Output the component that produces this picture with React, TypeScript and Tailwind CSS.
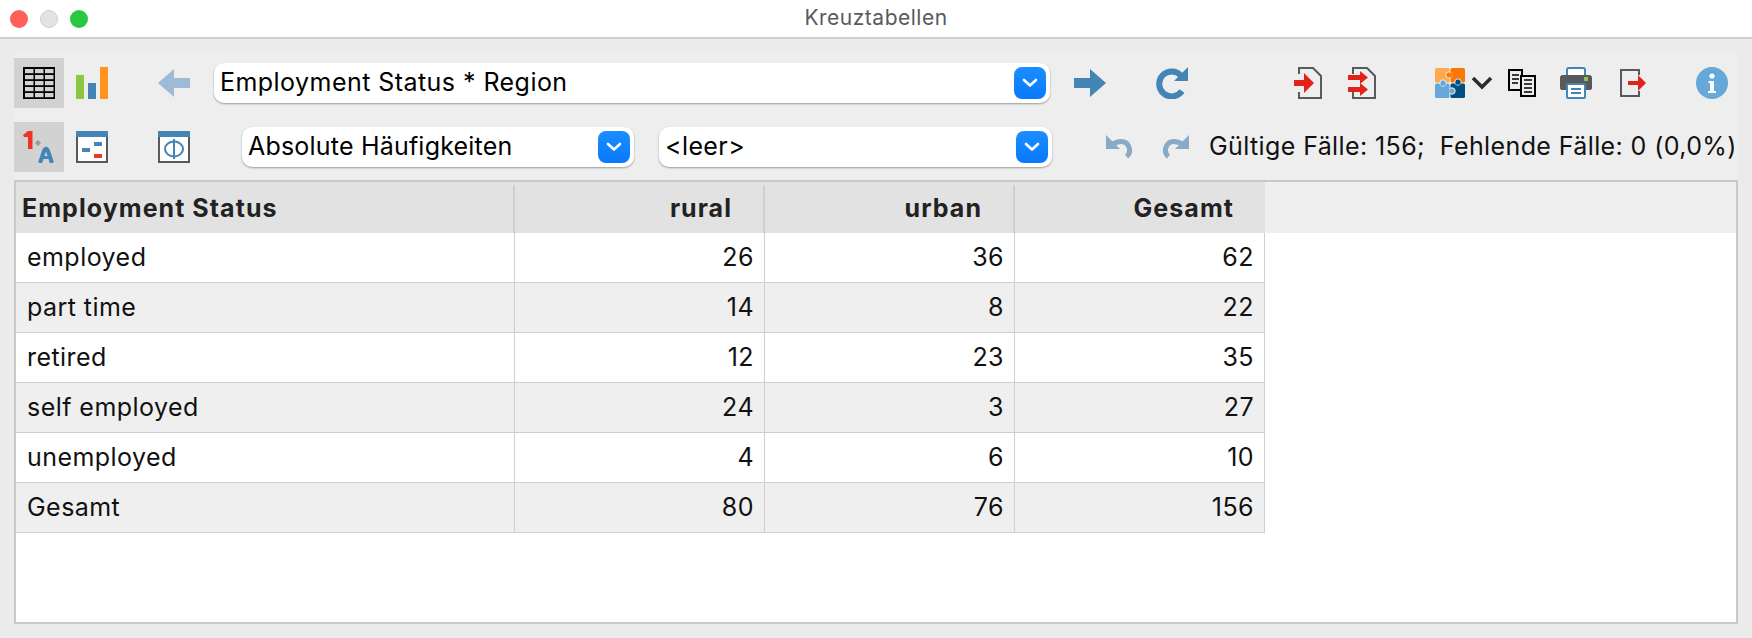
import React from 'react';

const FONT = 'font-["Inter","Liberation_Sans",sans-serif]';

const rows = [
  ['employed', '26', '36', '62'],
  ['part time', '14', '8', '22'],
  ['retired', '12', '23', '35'],
  ['self employed', '24', '3', '27'],
  ['unemployed', '4', '6', '10'],
  ['Gesamt', '80', '76', '156'],
];

const ToolButton: React.FC<{ selected?: boolean; className?: string; children: React.ReactNode }> = ({
  selected,
  className = '',
  children,
}) => (
  <div className={`flex h-[50px] w-[50px] shrink-0 items-center justify-center ${selected ? 'bg-[#d2d2d2]' : ''} ${className}`}>
    {children}
  </div>
);

const Select: React.FC<{ label: string; className: string }> = ({ label, className }) => (
  <div className={`flex h-[40px] shrink-0 items-center justify-between rounded-[10px] bg-white pl-[6px] pr-[4px] text-[25px] text-black shadow-[0_1px_2px_rgba(0,0,0,0.35)] ${className}`}>
    <span>{label}</span>
    <div className="flex h-[32px] w-[32px] items-center justify-center rounded-[8px] bg-gradient-to-b from-[#1a8fff] to-[#0a78fa]">
      <svg width="16" height="10" viewBox="0 0 16 10">
        <path d="M2 2l6 5.5L14 2" fill="none" stroke="#fff" strokeWidth="2.6" strokeLinecap="round" strokeLinejoin="round" />
      </svg>
    </div>
  </div>
);

const GridIcon = () => (
  <svg width="32" height="32" viewBox="0 0 32 32">
    <rect x="0" y="0" width="32" height="32" fill="#000" />
    {[2, 8, 14, 20, 26].map(y =>
      [2, 12, 22].map(x => <rect key={`${x}-${y}`} x={x} y={y} width="8.5" height="4.2" fill="#d2d2d2" />)
    )}
  </svg>
);

const ChartIcon = () => (
  <svg width="32" height="32" viewBox="0 0 32 32">
    <rect x="0" y="8" width="8" height="24" fill="#8cc63f" />
    <rect x="12" y="16" width="8" height="16" fill="#4385b5" />
    <rect x="24" y="0" width="8" height="32" fill="#ff931e" />
  </svg>
);

const ArrowLeftIcon = () => (
  <svg width="32" height="28" viewBox="0 0 32 28">
    <path d="M0 14L16 0v9h16v10H16v9z" fill="#9dbbd5" />
  </svg>
);

const ArrowRightIcon = () => (
  <svg width="32" height="28" viewBox="0 0 32 28">
    <path d="M32 14L16 0v9H0v10h16v9z" fill="#4385b5" />
  </svg>
);

const RefreshIcon = () => (
  <svg width="32" height="32" viewBox="0 0 32 32">
    <path d="M25 8.5A12.5 12.5 0 1 0 26 24" fill="none" stroke="#4385b5" strokeWidth="6" />
    <path d="M32 0v14H18z" fill="#4385b5" />
  </svg>
);

const LetterIcon = () => (
  <svg width="32" height="32" viewBox="0 0 32 32">
    <path d="M0 4l5-4h4.5v18H5V6H1z" fill="#ee3524" />
    <path d="M15 9l3 3-3 3-3-3z" fill="#9a9a9a" />
    <path d="M17 32l4-12q2-4.5 4 0l4 12" fill="none" stroke="#4385b5" strokeWidth="4" />
    <path d="M19 26.5h8" stroke="#4385b5" strokeWidth="3" />
  </svg>
);

const WindowIcon: React.FC<{ children: React.ReactNode }> = ({ children }) => (
  <svg width="32" height="32" viewBox="0 0 32 32">
    <rect x="1" y="1" width="30" height="30" fill="#fff" stroke="#58595b" strokeWidth="2" />
    <rect x="0" y="0" width="32" height="6" fill="#4385b5" />
    {children}
  </svg>
);

const DocIcon: React.FC<{ double?: boolean }> = ({ double }) => (
  <svg width="28" height="32" viewBox="0 0 28 32">
    <path d="M5 7V1h14l8 8v22H5v-6" fill="none" stroke="#58595b" strokeWidth="2" />
    {double ? (
      <g fill="#e2231a">
        <path d="M0 8h12V4l8 6.5-8 6.5v-4H0z" />
        <path d="M0 20h12v-4l8 6.5-8 6.5v-4H0z" />
      </g>
    ) : (
      <path d="M0 13h10V6l10 10-10 10v-7H0z" fill="#e2231a" />
    )}
  </svg>
);

const PuzzleIcon = () => (
  <svg width="30" height="30" viewBox="0 0 30 30">
    <rect x="0" y="0" width="14.5" height="14.5" rx="1.5" fill="#ffa94d" />
    <rect x="15.5" y="0" width="14.5" height="14.5" rx="1.5" fill="#ff7600" />
    <rect x="0" y="15.5" width="14.5" height="14.5" rx="1.5" fill="#66a8da" />
    <rect x="15.5" y="15.5" width="14.5" height="14.5" rx="1.5" fill="#00507f" />
    <circle cx="14" cy="7" r="3.2" fill="#ff7600" stroke="#eeeeee" />
    <circle cx="8" cy="15" r="3.2" fill="#66a8da" stroke="#eeeeee" />
    <circle cx="17" cy="23" r="3.2" fill="#66a8da" stroke="#eeeeee" />
    <circle cx="23" cy="14" r="3.2" fill="#00507f" stroke="#eeeeee" />
    <rect x="15.5" y="4.5" width="2" height="5" fill="#ff7600" />
    <rect x="5.5" y="15.5" width="5" height="2" fill="#66a8da" />
    <rect x="12.5" y="20.5" width="2" height="5" fill="#66a8da" />
    <rect x="20.5" y="14.5" width="5" height="2" fill="#00507f" />
  </svg>
);

const ChevronIcon = () => (
  <svg width="22" height="14" viewBox="0 0 22 14" className="ml-[6px]">
    <path d="M2 2l9 9 9-9" fill="none" stroke="#2b2b2b" strokeWidth="3.6" />
  </svg>
);

const CopyIcon = () => (
  <svg width="28" height="28" viewBox="0 0 28 28" fill="none" stroke="#000" strokeWidth="2">
    <path d="M12 21H1V1h13v5" />
    <rect x="13" y="7" width="14" height="20" fill="#eee" />
    <path d="M4 6h7M4 10h7M4 14h6M16 11h8M16 15h8M16 19h8M16 23h8" strokeWidth="1.6" />
  </svg>
);

const PrinterIcon = () => (
  <svg width="32" height="32" viewBox="0 0 32 32">
    <rect x="7" y="1" width="18" height="10" rx="2" fill="#fff" stroke="#4385b5" strokeWidth="2" />
    <path d="M3 8h26q3 0 3 3v10q0 2-3 2H3q-3 0-3-2V11q0-3 3-3z" fill="#58595b" />
    <rect x="24" y="10" width="4" height="4" fill="#8cc63f" />
    <rect x="7" y="17" width="18" height="14" rx="1" fill="#fff" stroke="#4385b5" strokeWidth="2" />
    <path d="M11 22h10M11 26h10" stroke="#4385b5" strokeWidth="2" />
  </svg>
);

const ExitIcon = () => (
  <svg width="26" height="28" viewBox="0 0 26 28">
    <path d="M19 6V1H1v26h18v-5" fill="none" stroke="#58595b" strokeWidth="2" />
    <path d="M8 12h10V6l8 8-8 8v-6H8z" fill="#e2231a" />
  </svg>
);

const InfoIcon = () => (
  <svg width="32" height="32" viewBox="0 0 32 32">
    <circle cx="16" cy="16" r="16" fill="#66a8da" />
    <circle cx="16" cy="9" r="2.6" fill="#fff" />
    <path d="M12.5 14h5.5v10h2v2h-8v-2h2v-8h-1.5z" fill="#fff" />
  </svg>
);

const UndoIcon: React.FC<{ flip?: boolean }> = ({ flip }) => (
  <svg width="28" height="24" viewBox="0 0 28 24" className={flip ? '-scale-x-100' : ''}>
    <path d="M6 10Q10 6.5 15 6.5A8.5 8.5 0 0 1 20.5 21.5" fill="none" stroke="#86aac7" strokeWidth="5" />
    <path d="M0 0v14h14z" fill="#86aac7" />
  </svg>
);

const App: React.FC = () => {
  return (
    <div className={`flex h-[638px] w-[1752px] flex-col overflow-hidden bg-[#ebebeb] ${FONT} text-black`}>
      {/* title bar */}
      <div className="relative flex h-[39px] shrink-0 items-center justify-center border-b-2 border-[#cfcfcf] bg-white pb-[1px]">
        <div className="absolute left-[10px] top-[10px] flex gap-[12px]">
          <div className="h-[18px] w-[18px] rounded-full bg-[#ff5f57]" />
          <div className="h-[18px] w-[18px] rounded-full border border-[#d0d0d0] bg-[#e3e3e3]" />
          <div className="h-[18px] w-[18px] rounded-full bg-[#28c840]" />
        </div>
        <span className="text-[21px] tracking-[0.5px] text-[#5a5a5a]">Kreuztabellen</span>
      </div>

      <div className="flex flex-1 flex-col px-[14px] pb-[14px] pt-[13px]">
        <div className="bg-[#eeeeee] pb-[8px] pt-[6px]">
          {/* first toolbar */}
          <div className="flex h-[50px] items-center">
            <ToolButton selected><GridIcon /></ToolButton>
            <ToolButton className="ml-[3px]"><ChartIcon /></ToolButton>
            <ToolButton className="ml-[32px]"><ArrowLeftIcon /></ToolButton>
            <Select label="Employment Status * Region" className="ml-[15px] w-[836px] tracking-[0.45px]" />
            <ToolButton className="ml-[15px]"><ArrowRightIcon /></ToolButton>
            <ToolButton className="ml-[32px]"><RefreshIcon /></ToolButton>
            <ToolButton className="ml-[86px]"><DocIcon /></ToolButton>
            <ToolButton className="ml-[4px]"><DocIcon double /></ToolButton>
            <div className="ml-[48px] flex w-[58px] shrink-0 items-center">
              <PuzzleIcon />
              <ChevronIcon />
            </div>
            <ToolButton className="ml-[4px]"><CopyIcon /></ToolButton>
            <ToolButton className="ml-[4px]"><PrinterIcon /></ToolButton>
            <ToolButton className="ml-[7px]"><ExitIcon /></ToolButton>
            <ToolButton className="ml-[29px]"><InfoIcon /></ToolButton>
          </div>

          {/* second toolbar */}
          <div className="mt-[14px] flex h-[50px] items-center">
            <ToolButton selected><LetterIcon /></ToolButton>
            <ToolButton className="ml-[3px]">
              <WindowIcon>
                <rect x="6" y="17" width="8" height="4" fill="#4385b5" />
                <rect x="18" y="11" width="8" height="4" fill="#4385b5" />
                <rect x="18" y="23" width="8" height="4" fill="#ee3524" />
              </WindowIcon>
            </ToolButton>
            <ToolButton className="ml-[32px]">
              <WindowIcon>
                <ellipse cx="16" cy="18" rx="9" ry="7.5" fill="none" stroke="#4385b5" strokeWidth="2" />
                <path d="M16 8v20" stroke="#4385b5" strokeWidth="2" />
              </WindowIcon>
            </ToolButton>
            <Select label="Absolute Häufigkeiten" className="ml-[43px] w-[392px] tracking-[0.2px]" />
            <Select label="<leer>" className="ml-[25px] w-[393px] tracking-[0.4px]" />
            <ToolButton className="ml-[43px]"><UndoIcon /></ToolButton>
            <ToolButton className="ml-[5px]"><UndoIcon flip /></ToolButton>
            <span className="ml-[9px] whitespace-pre text-[25px] tracking-[0.39px] text-[#111]">Gültige Fälle: 156;  Fehlende Fälle: 0 (0,0%)</span>
          </div>
        </div>

        {/* crosstab */}
        <div className="min-h-0 flex-1 border-2 border-[#c9c9c9] bg-white text-[25px] tracking-[0.45px] text-[#111]">
          <div className="bg-[#efefef]">
            <div className="grid h-[51px] w-[1249px] grid-cols-[499px_250px_250px_250px] items-stretch bg-[#e2e2e2] pt-[3px] font-bold tracking-[1.05px] text-[#222]">
              <div className="flex items-center border-r-2 border-[#cfcfcf] pl-[6px]">Employment Status</div>
              <div className="flex items-center justify-end border-r-2 border-[#cfcfcf] pr-[31px]">rural</div>
              <div className="flex items-center justify-end border-r-2 border-[#cfcfcf] pr-[31px]">urban</div>
              <div className="flex items-center justify-end pr-[31px]">Gesamt</div>
            </div>
          </div>
          {rows.map((row, i) => (
            <div
              key={row[0]}
              className={`grid h-[50px] w-[1249px] grid-cols-[499px_250px_250px_250px] border-b border-[#cfcfcf] ${i % 2 === 1 || i === 5 ? 'bg-[#efefef]' : 'bg-white'}`}
            >
              <div className="flex items-center border-r border-[#cfcfcf] pl-[11px]">{row[0]}</div>
              <div className="flex items-center justify-end border-r border-[#cfcfcf] pr-[10px]">{row[1]}</div>
              <div className="flex items-center justify-end border-r border-[#cfcfcf] pr-[10px]">{row[2]}</div>
              <div className="flex items-center justify-end border-r border-[#cfcfcf] pr-[10px]">{row[3]}</div>
            </div>
          ))}
        </div>
      </div>
    </div>
  );
};

export default App;
